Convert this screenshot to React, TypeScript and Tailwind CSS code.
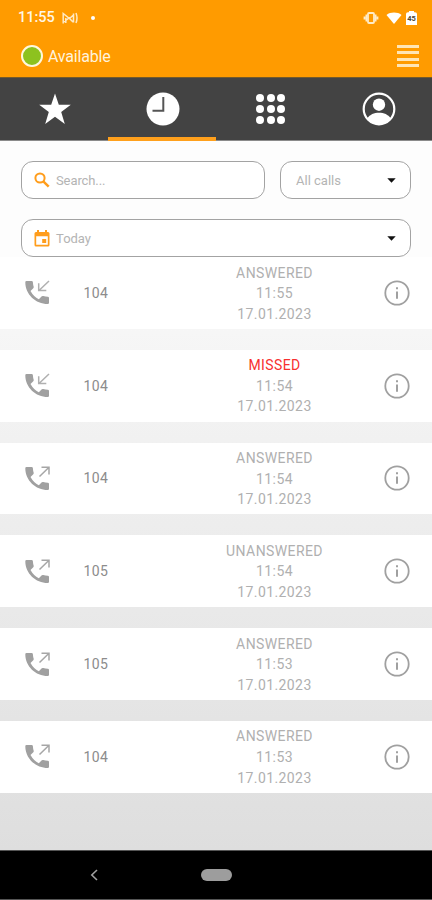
import React from "react";

const calls = [
  { dir: "in", number: "104", status: "ANSWERED", time: "11:55" },
  { dir: "in", number: "104", status: "MISSED", time: "11:54" },
  { dir: "out", number: "104", status: "ANSWERED", time: "11:54" },
  { dir: "out", number: "105", status: "UNANSWERED", time: "11:54" },
  { dir: "out", number: "105", status: "ANSWERED", time: "11:53" },
  { dir: "out", number: "104", status: "ANSWERED", time: "11:53" },
];

const StatusBar = () => (
  <div className="flex h-9 items-center pl-[18px] pr-[15px] text-white">
    <span className="w-[38px] text-[14.5px] font-medium leading-none text-[#fff7e6]">11:55</span>
    <svg className="ml-[6px] h-3 w-4" viewBox="0 0 16 12" fill="none" stroke="#ffe9c4" strokeWidth="1.5">
      <path d="M1.2 11.5V1.5L7.5 6.5L12 2.5M3.8 11V6M1.2 10.5L7 6L11 10M11.5 1.5V10.5M14 1Q16 6 14 11" />
    </svg>
    <span className="ml-[13px] size-1 rounded-full bg-white" />
    <div className="ml-auto flex items-center">
      <svg className="h-3 w-4" viewBox="0 0 16 12" fill="none" stroke="#ffecc8" strokeWidth="1.8">
        <rect x="5" y="1" width="6" height="10" rx="1" />
        <path d="M3.4 2.5V9.5M12.6 2.5V9.5M1.5 4.5V7.5M14.5 4.5V7.5" />
      </svg>
      <svg className="ml-[7px] h-3 w-4" viewBox="0 0 16 12" fill="white">
        <path d="M0.5 3C4.5 -0.2 11.5 -0.2 15.5 3L8 12Z" />
      </svg>
      <svg className="ml-1 h-[14px] w-[11px]" viewBox="0 0 11 14">
        <path d="M3 0H8V1.3H9Q11 1.3 11 3V14H0V3Q0 1.3 2 1.3H3Z" fill="white" />
        <text x="5.5" y="9.7" textAnchor="middle" fontSize="7.5" fontWeight="700" fontFamily="Roboto, sans-serif" fill="#4d4632">
          45
        </text>
      </svg>
    </div>
  </div>
);

const Header = () => (
  <div className="h-[77px] bg-[#ff9b00]">
    <StatusBar />
    <div className="flex h-10 items-center pl-[21px] pr-[13px]">
      <span className="size-[22px] rounded-full border-2 border-[#fff8dc] bg-[#8dc21f]" />
      <span className="ml-[5px] pt-px text-base tracking-[-0.2px] text-[#fff3dc]">Available</span>
      <div className="ml-auto flex w-[22px] flex-col gap-[3.4px]">
        <span className="h-[3px] bg-[#ffe5b5]" />
        <span className="h-[3px] bg-[#ffe5b5]" />
        <span className="h-[3px] bg-[#ffe5b5]" />
        <span className="h-[3px] bg-[#ffe5b5]" />
      </div>
    </div>
  </div>
);

const Tabs = () => (
  <div className="z-10 grid h-[63px] grid-cols-4 border-t border-[#735a2c] bg-[#434343]">
    <div className="flex items-center justify-center border-b border-[#8b8b8b] pl-px">
      <svg className="size-8" viewBox="0 0 32 32" fill="white">
        <path d="M16 0.5L19.8 11.8H31.8L22.2 19L25.8 31L16 23.8L6.2 31L9.8 19L0.2 11.8H12.2Z" />
      </svg>
    </div>
    <div className="flex h-[63px] items-center justify-center border-b-4 border-[#ffa01c] pl-px pt-0.5">
      <svg className="size-[34px]" viewBox="0 0 34 34">
        <circle cx="17" cy="17" r="16.5" fill="white" />
        <path d="M17.3 5V18.8H6.5" fill="none" stroke="#555" strokeWidth="2" />
      </svg>
    </div>
    <div className="flex items-center justify-center border-b border-[#8b8b8b] pl-px">
      <div className="grid grid-cols-3 gap-[2.6px]">
        {Array.from({ length: 9 }).map((_, i) => (
          <span key={i} className="size-2 rounded-full bg-white" />
        ))}
      </div>
    </div>
    <div className="flex items-center justify-center border-b border-[#8b8b8b] pl-px">
      <svg className="size-[34px]" viewBox="0 0 34 34">
        <circle cx="17" cy="17" r="15.3" fill="none" stroke="white" strokeWidth="2.2" />
        <circle cx="17" cy="12.7" r="6.2" fill="white" />
        <path d="M5.2 26.5C8 22.5 12 20.8 17 20.8S26 22.5 28.8 26.5C26 30.5 22 32.3 17 32.3S8 30.5 5.2 26.5Z" fill="white" />
      </svg>
    </div>
  </div>
);

const Caret = () => (
  <svg className="ml-auto mr-[14px] h-[5px] w-[9px]" viewBox="0 0 9 5">
    <path d="M0.3 0.3H8.7L4.5 4.8Z" fill="#111" />
  </svg>
);

const Filters = () => (
  <div className="flex h-[117px] flex-col gap-5 bg-[#fdfdfd] px-[21px] pt-[21px] text-[13px] text-[#b4b4b4]">
    <div className="flex gap-[15px]">
      <div className="flex h-[38px] w-[244px] items-center rounded-xl border-[1.5px] border-[#a3a3a3] bg-white pl-3">
        <svg className="size-4" viewBox="0 0 16 16" fill="none" stroke="#ff9d1c" strokeWidth="2">
          <circle cx="6" cy="6" r="4.6" />
          <path d="M9.3 9.3L14.7 14.7" strokeWidth="2.4" />
        </svg>
        <span className="ml-[6px] pt-0.5 tracking-[-0.1px]">Search...</span>
      </div>
      <div className="flex h-[38px] flex-1 items-center rounded-xl border-[1.5px] border-[#a3a3a3] bg-white pl-[15px]">
        <span className="pt-0.5">All calls</span>
        <Caret />
      </div>
    </div>
    <div className="flex h-[38px] shrink-0 items-center rounded-xl border-[1.5px] border-[#a3a3a3] bg-white pl-3">
      <svg className="h-[17px] w-4" viewBox="0 0 16 17">
        <path
          fillRule="evenodd"
          fill="#ff9d1c"
          d="M3 0H5V2H11V0H13V2H14Q15.5 2 15.5 3.5V15Q15.5 16.5 14 16.5H2Q0.5 16.5 0.5 15V3.5Q0.5 2 2 2H3ZM2.2 6.2V14.8H13.8V6.2ZM8.2 9H12.2V13H8.2Z"
        />
      </svg>
      <span className="ml-[6px] pt-px text-[13px]">Today</span>
      <Caret />
    </div>
  </div>
);

const CallIcon = ({ dir }: any) => (
  <svg className="h-[25px] w-[25px]" viewBox="0 0 25 25">
    <path
      fill="#a0a0a0"
      d="M1.5 1H6.6Q7.8 1 7.9 2.2Q8 4.6 8.7 6.8Q8.9 7.6 8.3 8.2L5.5 11Q8.6 16.6 13.8 19.3L16.8 16.3Q17.4 15.8 18.2 16Q20.5 16.7 22.8 16.8Q24 16.9 24 18V22.7Q24 24 22.8 24C10.5 24 0.3 14.2 0.3 2.2Q0.3 1 1.5 1Z"
    />
    {dir === "in" ? (
      <path d="M24 1L14 10.5M13.7 3.2V10.6H21.3" fill="none" stroke="#b0b0b0" strokeWidth="1.5" />
    ) : (
      <path d="M14.5 10.5L24 1.2M16.5 1.2H24V8.5" fill="none" stroke="#a6a6a6" strokeWidth="1.5" />
    )}
  </svg>
);

const CallRow = ({ call }: any) => (
  <div className="flex h-[71.8px] shrink-0 items-center bg-white pl-[24.5px] pr-[22px]">
    <CallIcon dir={call.dir} />
    <span className="ml-[34px] w-[90px] text-sm tracking-[0.4px] text-[#8c8c8c]">{call.number}</span>
    <div className="w-[202px] pt-px text-center text-sm leading-[20.6px] tracking-[0.4px] text-[#b0b0b0]">
      <div className={call.status === "MISSED" ? "text-[#f8302f]" : ""}>{call.status}</div>
      <div>{call.time}</div>
      <div>17.01.2023</div>
    </div>
    <svg className="ml-auto size-[26px]" viewBox="0 0 26 26">
      <circle cx="13" cy="13" r="11.7" fill="none" stroke="#a0a0a0" strokeWidth="1.8" />
      <path d="M13 11.5V18.7M13 7.2V9.3" stroke="#a0a0a0" strokeWidth="2" />
    </svg>
  </div>
);

const App = () => {
  return (
    <div className="flex h-[900px] w-[432px] flex-col overflow-hidden font-['Roboto',sans-serif]">
      <Header />
      <Tabs />
      <div className="flex h-[710px] flex-col bg-linear-to-b from-white to-[#dedede]">
        <Filters />
        <div className="flex flex-col gap-[21px]">
          {calls.map((call, i) => (
            <CallRow key={i} call={call} />
          ))}
        </div>
      </div>
      <div className="flex h-[50px] items-center border-t border-b border-t-[#555] border-b-[#555] bg-black">
        <svg className="ml-[90px] h-3 w-2" viewBox="0 0 8 12" fill="none" stroke="#a0a0a0" strokeWidth="1.6">
          <path d="M7 1L1.8 6L7 11" />
        </svg>
        <span className="ml-[103px] h-3 w-[31px] rounded-full bg-[#9d9d9d]" />
      </div>
    </div>
  );
};

export default App;
